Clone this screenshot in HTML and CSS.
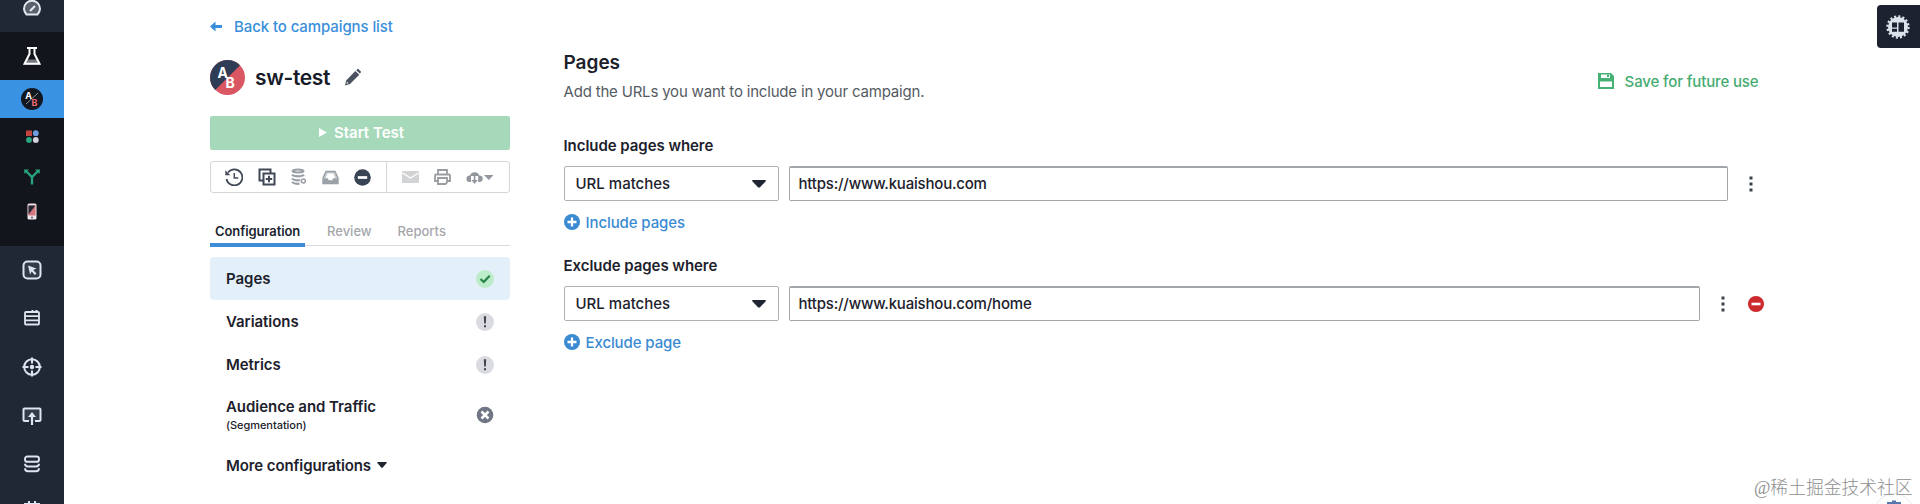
FILE: index.html
```
<!DOCTYPE html>
<html lang="en">
	<head>
		<meta charset="utf-8">
		<title>sw-test - Pages</title>
		<link rel="stylesheet" href="styles.css">
	</head>
	<body>
		<div class="app">
			<nav class="rail">
				<a class="rail-item gauge">
					<svg width="20" height="18" viewBox="0 0 20 18"><path d="M4.500 15.500A8 8 0 1 1 15.500 15.500Z" fill="#5a606c" stroke="#e4e8ef" stroke-width="2" stroke-linejoin="round"/><path d="M8 12l5-5" stroke="#e4e8ef" stroke-width="2.200"/></svg>
				</a>
				<div class="rail-group">
					<a class="rail-item flask">
						<svg width="18" height="20" viewBox="0 0 18 20"><path d="M4 13.500h10l3 5H1z" fill="#777b82"/><path d="M4 2h10M6.500 2v6L1.500 17.800h15L11.500 8V2" fill="none" stroke="#fff" stroke-width="2"/></svg>
					</a>
					<a class="rail-item active">
						<svg width="22" height="22" viewBox="0 0 22 22"><circle cx="11" cy="11" r="11" fill="#12161f"/><path d="M5 16L17 5" stroke="#8b8f98" stroke-width="1"/><text x="4.300" y="11" class="ab-small" fill="#fff">A</text><text x="10.500" y="18" class="ab-small" fill="#ef6a70">B</text></svg>
					</a>
					<a class="rail-item dots">
						<svg width="13" height="13" viewBox="0 0 13 13"><path d="M0 .5h6v5.500H0z" fill="#c0453f"/><circle cx="9.800" cy="3.200" r="2.900" fill="#6f9fe0"/><circle cx="3" cy="9.900" r="2.900" fill="#2aa77f"/><circle cx="9.800" cy="9.900" r="2.900" fill="#d5d3e0"/></svg>
					</a>
					<a class="rail-item fork">
						<svg width="16" height="16" viewBox="0 0 16 16"><path d="M2.500 2.500L8 8l5.500-5.500M8 8v7.500" fill="none" stroke="#27a37c" stroke-width="2.400"/><path d="M0 .5h5L.5 5zM16 .5h-5L15.500 5z" fill="#27a37c"/></svg>
					</a>
					<a class="rail-item phone">
						<svg width="10" height="17" viewBox="0 0 10 17"><rect x=".5" y=".5" width="9" height="16" rx="1.500" fill="#efe6ea"/><path d="M1.500 2.500h7v10h-7z" fill="#d4767d"/><path d="M1.500 2.500h7l-7 9z" fill="#242934"/><circle cx="5" cy="14.500" r="1" fill="#555b66"/></svg>
					</a>
				</div>
				<a class="rail-item pointer">
					<svg width="20" height="20" viewBox="0 0 20 20"><rect x="1.500" y="1.500" width="17" height="17" rx="4" fill="#343b48" stroke="#dfe5ee" stroke-width="2"/><path d="M6 5.500l8.500 3-3.300 1.600 3.300 3.400-1.700 1.500-3.100-3.400-1.600 3z" fill="#dfe5ee"/></svg>
				</a>
				<a class="rail-item list">
					<svg width="18" height="18" viewBox="0 0 18 18"><path d="M9.500 1v2M13.500 1v2" stroke="#dfe5ee" stroke-width="2"/><rect x="2" y="3" width="14" height="12.500" rx="1" fill="none" stroke="#dfe5ee" stroke-width="1.800"/><path d="M2 7.200h14M2 11.300h14" stroke="#dfe5ee" stroke-width="1.700"/></svg>
				</a>
				<a class="rail-item">
					<svg width="20" height="20" viewBox="0 0 20 20"><circle cx="10" cy="10" r="7.800" fill="none" stroke="#dfe5ee" stroke-width="2"/><path d="M10 .5v6M10 13.500v6M.5 10h6M13.500 10h6" stroke="#dfe5ee" stroke-width="2"/><circle cx="10" cy="10" r="2.200" fill="#dfe5ee"/></svg>
				</a>
				<a class="rail-item">
					<svg width="20" height="20" viewBox="0 0 20 20"><path d="M7 15H2.500a1 1 0 0 1-1-1V3.500a1 1 0 0 1 1-1h15a1 1 0 0 1 1 1V14a1 1 0 0 1-1 1H13" fill="#343b48" stroke="#dfe5ee" stroke-width="2"/><path d="M10 19V9" stroke="#dfe5ee" stroke-width="2.200"/><path d="M6 11l4-5 4 5z" fill="#dfe5ee"/></svg>
				</a>
				<a class="rail-item stack">
					<svg width="18" height="18" viewBox="0 0 18 18" fill="none" stroke="#dfe5ee" stroke-width="1.900"><rect x="2" y="1.500" width="14" height="5.300" rx="2.400"/><path d="M2 8.800c0 2.200 1.200 2.700 3 2.700h8c1.800 0 3-.5 3-2.700M2 13.300c0 2.200 1.200 3 3 3h8c1.800 0 3-.8 3-3"/></svg>
				</a>
				<a class="rail-item last">
					<svg width="18" height="18" viewBox="0 0 18 18"><path d="M2 16V3h14v13M6 0v5M12 0v5" fill="none" stroke="#dfe5ee" stroke-width="2"/></svg>
				</a>
			</nav>

			<aside class="campaign">
				<a class="back">
					<svg width="12" height="11" viewBox="0 0 12 11"><path d="M0 5.500L5.500.5v3.600H12v2.800H5.500v3.600z" fill="#3a8fda"/></svg>
					<span>Back to campaigns list</span>
				</a>
				<div class="name">
					<svg width="35" height="35" viewBox="0 0 35 35"><circle cx="17.500" cy="17.500" r="17.500" fill="#d95762"/><path d="M30 5.200A17.500 17.500 0 1 0 5.200 30z" fill="#2e3d55"/><text x="7.500" y="17.500" class="ab-big">A</text><text x="15.500" y="28" class="ab-big">B</text></svg>
					<h1>sw-test</h1>
					<svg width="16" height="17" viewBox="0 0 16 17"><path d="M0 16.500l1.200-5L10.300 2l4 3.800L5 15z" fill="#4a5260"/><path d="M11.200 1.200l1-.9c.5-.4 1-.3 1.400 0l2 2c.5.500.5 1 0 1.400l-.8.900z" fill="#4a5260"/><path d="M1.500 14.800l.5-2 1.500 1.500z" fill="#fff"/></svg>
				</div>
				<button class="start">
					<svg width="8" height="9" viewBox="0 0 8 9"><path d="M0 0l8 4.500L0 9z" fill="#fff"/></svg>
					<span>Start Test</span>
				</button>
				<div class="toolbar">
					<div class="tools">
						<svg width="18" height="18" viewBox="0 0 18 18"><path d="M3 4.500A8 8 0 1 1 1.500 11" fill="none" stroke="#414956" stroke-width="1.700"/><path d="M.3 2.200v5h5z" fill="#414956"/><path d="M9.300 5v5h4" fill="none" stroke="#414956" stroke-width="1.500"/></svg>
						<svg width="18" height="18" viewBox="0 0 18 18" fill="none" stroke="#414956" stroke-width="2"><path d="M5 12.500H1.500v-11h11V5"/><path d="M5.500 5.500h11v11h-11zM11 7.800v6.400M7.800 11h6.400"/></svg>
						<svg width="16" height="18" viewBox="0 0 16 18" fill="none" stroke="#9a9fa6"><ellipse cx="7" cy="3" rx="5.500" ry="1.500" stroke-width="2"/><path d="M1 6.800c2 2 10 2 12 0M1 10.500c2 1.800 6 1.900 8 1.500M1 14c2 1.800 5 2 7.500 1.700" stroke-width="2.200"/><circle cx="12.300" cy="13" r="2" stroke-width="1.500"/></svg>
						<svg width="17" height="15" viewBox="0 0 17 15"><path d="M1 8L4 1.500h9L16 8v5.500H1z" fill="#c9cdd1" stroke="#959ba3" stroke-width="1.300"/><path d="M4 8L5.500 3.500h6L13 8h-2l-1 2H7L6 8z" fill="#fff"/><path d="M1 8.500h4.500l1 2h4l1-2H16V14H1z" fill="#9ba1a8"/></svg>
						<svg width="17" height="17" viewBox="0 0 17 17"><circle cx="8.500" cy="8.500" r="8.300" fill="#384354"/><path d="M3.800 8.500h9.400" stroke="#fff" stroke-width="2.700"/></svg>
					</div>
					<div class="tools exports">
						<svg width="17" height="12" viewBox="0 0 17 12"><rect width="17" height="12" rx="1" fill="#d2d3d5"/><path d="M.5 2l8 5 8-5" fill="none" stroke="#fff" stroke-width="1.200"/></svg>
						<svg width="17" height="16" viewBox="0 0 17 16" fill="none" stroke="#9a9da1" stroke-width="1.800"><path d="M4 5.500V1h9v4.500M4 12H1V6.500q0-1 1-1h13q1 0 1 1V12h-3"/><path d="M4 9h9v4.500L11.500 15H4z"/></svg>
						<svg width="28" height="15" viewBox="0 0 28 15"><path d="M3.500 12a3.300 3.300 0 0 1 .5-6.600 5 5 0 0 1 9.300 0 3.300 3.300 0 0 1 .2 6.600h-1.300V6H5v6z" fill="#92979e"/><path d="M8.600 5v7" stroke="#92979e" stroke-width="1.700"/><path d="M5.400 10h6.400l-3.200 4z" fill="#92979e"/><path d="M18 5h9.500l-4.700 5z" fill="#92979e"/></svg>
					</div>
				</div>
				<div class="tabs">
					<a class="tab current">Configuration</a>
					<a class="tab review">Review</a>
					<a class="tab reports">Reports</a>
				</div>
				<ul class="steps">
					<li class="step selected">
						<span>Pages</span>
						<svg width="18" height="18" viewBox="0 0 18 18"><circle cx="9" cy="9" r="9" fill="#bdeccb"/><path d="M4.500 9l3.200 3 6-6.300" fill="none" stroke="#278348" stroke-width="2.300"/></svg>
					</li>
					<li class="step">
						<span>Variations</span>
						<svg width="18" height="18" viewBox="0 0 18 18"><circle cx="9" cy="9" r="9" fill="#d9dbe0"/><path d="M7.800 3.300h2.400l-.4 7.200H8.200zM8 12.200h2v2H8z" fill="#3e4350"/></svg>
					</li>
					<li class="step">
						<span>Metrics</span>
						<svg width="18" height="18" viewBox="0 0 18 18"><circle cx="9" cy="9" r="9" fill="#d9dbe0"/><path d="M7.800 3.300h2.400l-.4 7.200H8.200zM8 12.200h2v2H8z" fill="#3e4350"/></svg>
					</li>
					<li class="step audience">
						<span>Audience and Traffic<small>(Segmentation)</small></span>
						<svg width="18" height="18" viewBox="0 0 18 18"><circle cx="9" cy="9" r="8.300" fill="#707684"/><path d="M5.500 5.500l7 7M12.500 5.500l-7 7" stroke="#fff" stroke-width="2.500"/></svg>
					</li>
					<li class="step more">
						<span>More configurations</span>
						<svg width="10" height="6" viewBox="0 0 10 6"><path d="M.8 0h8.400q1.200.1.400 1L5.800 5.500q-.8.800-1.600 0L.4 1Q-.4.100.8 0z" fill="#1f2430"/></svg>
					</li>
				</ul>
			</aside>

			<main class="content">
				<header class="heading">
					<div>
						<h2>Pages</h2>
						<p>Add the URLs you want to include in your campaign.</p>
					</div>
					<a class="save">
						<svg width="16" height="16" viewBox="0 0 16 16"><path d="M0 0h13l3 3v13H0z" fill="#45b173"/><path d="M3 1.500h9V5H3zM2 8.500h12V14H2z" fill="#fff"/><path d="M9 1.500h2V4H9z" fill="#45b173"/></svg>
						<span>Save for future use</span>
					</a>
				</header>

				<section class="rule">
					<h3>Include pages where</h3>
					<div class="fields">
						<div class="select">
							<span>URL matches</span>
							<svg width="14" height="8" viewBox="0 0 14 8"><path d="M1 0h12q1.500.2.500 1.500L8 7.300q-1 .9-2 0L.5 1.500Q-.5.200 1 0z" fill="#1f2533"/></svg>
						</div>
						<div class="url">https://www.kuaishou.com</div>
						<svg class="kebab" width="4" height="16" viewBox="0 0 4 16"><path d="M.5.500h3v3h-3zM.5 6.500h3v3h-3zM.5 12.500h3v3h-3z" fill="#3d434c"/></svg>
					</div>
					<a class="add">
						<svg width="16" height="16" viewBox="0 0 16 16"><circle cx="8" cy="8" r="8" fill="#3a8bd2"/><path d="M8 3.500v9M3.500 8h9" stroke="#fff" stroke-width="2.300"/></svg>
						<span>Include pages</span>
					</a>
				</section>

				<section class="rule">
					<h3>Exclude pages where</h3>
					<div class="fields">
						<div class="select">
							<span>URL matches</span>
							<svg width="14" height="8" viewBox="0 0 14 8"><path d="M1 0h12q1.500.2.500 1.500L8 7.300q-1 .9-2 0L.5 1.500Q-.5.200 1 0z" fill="#1f2533"/></svg>
						</div>
						<div class="url">https://www.kuaishou.com/home</div>
						<svg class="kebab" width="4" height="16" viewBox="0 0 4 16"><path d="M.5.500h3v3h-3zM.5 6.500h3v3h-3zM.5 12.500h3v3h-3z" fill="#3d434c"/></svg>
						<svg class="remove" width="16" height="16" viewBox="0 0 16 16"><circle cx="8" cy="8" r="8" fill="#cc2a2d"/><path d="M3.500 8h9" stroke="#fff" stroke-width="2.600"/></svg>
					</div>
					<a class="add">
						<svg width="16" height="16" viewBox="0 0 16 16"><circle cx="8" cy="8" r="8" fill="#3a8bd2"/><path d="M8 3.500v9M3.500 8h9" stroke="#fff" stroke-width="2.300"/></svg>
						<span>Exclude page</span>
					</a>
				</section>
			</main>
		</div>

		<button class="settings">
			<svg width="24" height="24" viewBox="0 0 24 24"><circle cx="12" cy="12" r="10" fill="#dce1eb"/><circle cx="12" cy="12" r="10.500" fill="none" stroke="#dce1eb" stroke-width="2.400" stroke-dasharray="2.060 2.060"/><path d="M6 7.500h5v5H6zM6 13.700h5v3H6zM12.500 7.500H18v9.200h-5.500z" fill="#1c2230"/></svg>
		</button>
		<div class="chat">
			<svg width="40" height="11" viewBox="0 0 40 11"><circle cx="20" cy="20" r="19.500" fill="#fff" stroke="#e6e7e9"/><path d="M13 11V9h5V7.500h4V9h5v2z" fill="#5778ae"/></svg>
		</div>
		<div class="watermark">@稀土掘金技术社区</div>
	</body>
</html>
```
FILE: styles.css
```
* {
	box-sizing: border-box;
}

body {
	margin: 0;
	height: 504px;
	overflow: hidden;
	background: #fff;
	color: #1c212c;
	font-family: Inter, "Liberation Sans", sans-serif;
	font-size: 15px;
	font-weight: 500;
}

h1, h2, h3, p, ul {
	margin: 0;
	padding: 0;
}

svg {
	display: block;
	flex: none;
}

.app {
	display: flex;
	height: 504px;
}

/* left rail */
.rail {
	flex: none;
	width: 64px;
	height: 504px;
	overflow: hidden;
	background: #202735;
}

.rail-item {
	display: flex;
	align-items: center;
	justify-content: center;
	height: 48.5px;
}

.rail-group {
	height: 214px;
	background: #12151c;
}

.gauge {
	height: 32px;
	padding-bottom: 16px;
}

.flask {
	height: 48px;
}

.active {
	height: 38px;
	background: #3a93e2;
}

.dots {
	height: 37px;
}

.fork {
	height: 44px;
}

.phone {
	height: 26px;
	padding-bottom: 2px;
}

.list {
	padding-bottom: 2px;
}

.stack {
	padding-bottom: 1px;
}

/* only the top of this one is above the fold */
.last {
	height: 15px;
	align-items: flex-start;
	padding-top: 12px;
}

.ab-small {
	font-size: 9px;
	font-weight: 700;
}

.ab-big {
	font-size: 14px;
	font-weight: 700;
	fill: #fff;
}

/* campaign column */
.campaign {
	flex: none;
	width: 300px;
	margin-left: 146px;
}

.back {
	display: flex;
	align-items: center;
	gap: 12px;
	height: 20px;
	margin-top: 16px;
	color: #3a8fda;
	letter-spacing: -.1px;
}

.name {
	display: flex;
	align-items: center;
	height: 36px;
	margin-top: 23px;
}

.name h1 {
	margin: 0 15px 0 10px;
	font-size: 21px;
	font-weight: 600;
	letter-spacing: -.35px;
	color: #171c28;
}

.start {
	display: flex;
	align-items: center;
	justify-content: center;
	gap: 7px;
	width: 300px;
	height: 34px;
	margin-top: 21px;
	padding: 0 0 2px 3px;
	border: 0;
	border-radius: 2px;
	background: #a6d9b9;
	color: #fff;
	font: 600 15px Inter, sans-serif;
}

.toolbar {
	display: flex;
	height: 32px;
	margin-top: 11px;
	border: 1px solid #d4d6d9;
	border-radius: 3px;
}

.tools {
	display: flex;
	align-items: center;
	justify-content: space-between;
	width: 176px;
	padding: 0 15px 0 14px;
}

.exports {
	width: 123px;
	border-left: 1px solid #d4d6d9;
	padding: 0 15px;
}

.tabs {
	display: flex;
	height: 30px;
	margin-top: 23px;
	border-bottom: 1px solid #d8dbde;
	color: #a5a7ab;
	font-size: 13px;
}

.tab {
	height: 31px;
	padding: 7px 5px 0;
	line-height: 16px;
}

.current {
	width: 95px;
	border-bottom: 4px solid #3e8cd7;
	color: #20252f;
	font-weight: 600;
	letter-spacing: -.1px;
}

.review {
	margin-left: 17px;
}

.reports {
	margin-left: 16px;
}

.steps {
	margin-top: 11px;
	list-style: none;
	font-weight: 600;
	letter-spacing: -.05px;
}

.step {
	display: flex;
	align-items: center;
	justify-content: space-between;
	height: 43px;
	padding: 0 16px;
	border-radius: 4px;
}

.selected {
	background: #e4f0f9;
}

.audience {
	height: 57px;
}

.step small {
	display: block;
	margin-top: 2px;
	font-size: 11px;
	font-weight: 500;
	line-height: 14px;
}

.more {
	justify-content: flex-start;
	gap: 6px;
	height: 44px;
	letter-spacing: -.1px;
}

/* page rules */
.content {
	width: 1202px;
	margin-left: 53.5px;
}

.heading {
	display: flex;
	justify-content: space-between;
	height: 85px;
	margin-top: 51px;
	padding-right: 7px;
}

.heading h2 {
	font-size: 19px;
	font-weight: 600;
	line-height: 24px;
}

.heading p {
	margin-top: 7px;
	color: #555b63;
	font-weight: 400;
	line-height: 20px;
	letter-spacing: -.19px;
}

.save {
	display: flex;
	align-items: center;
	gap: 11px;
	height: 20px;
	margin-top: 20px;
	color: #45ab70;
	letter-spacing: -.13px;
}

.rule {
	height: 120px;
}

.rule h3 {
	font-size: 15px;
	font-weight: 600;
	line-height: 20px;
	letter-spacing: -.05px;
}

.fields {
	display: flex;
	align-items: center;
	height: 35px;
	margin-top: 10px;
}

.select {
	display: flex;
	flex: none;
	align-items: center;
	justify-content: space-between;
	width: 215px;
	height: 35px;
	margin-right: 10px;
	padding: 0 12px 0 11px;
	border: 1px solid #aeb2b6;
	border-radius: 2px;
}

.url {
	flex: 1;
	height: 35px;
	padding: 0 9px;
	border: 1px solid #a2a6aa;
	border-top-width: 2px;
	border-radius: 2px;
	line-height: 32px;
	letter-spacing: -.2px;
}

.kebab {
	margin: 0 12px 0 21px;
}

.fields .kebab:last-child {
	margin-right: 13px;
}

.remove {
	margin: 0 2px 0 11px;
}

.add {
	display: flex;
	align-items: center;
	gap: 6px;
	height: 20px;
	margin-top: 11px;
	color: #3a8bd2;
	letter-spacing: -.1px;
}

/* overlays */
.settings {
	position: absolute;
	top: 5px;
	right: 0;
	display: flex;
	align-items: center;
	width: 43px;
	height: 43px;
	padding: 0 0 0 9px;
	border: 0;
	border-radius: 4px 0 0 4px;
	background: #1c2230;
}

.chat {
	position: absolute;
	top: 493px;
	left: 1874px;
}

.watermark {
	position: absolute;
	top: 475px;
	left: 1754px;
	color: #8f8f8f;
	font-family: "Liberation Serif", "Noto Sans CJK SC", serif;
	font-size: 17.800px;
	font-weight: 300;
	line-height: 26px;
	white-space: nowrap;
}
```
